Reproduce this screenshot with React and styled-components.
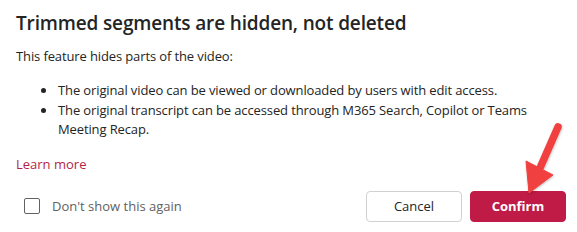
import React, { useState } from "react";
import styled, { createGlobalStyle } from "styled-components";

const GlobalStyle = createGlobalStyle`
  html, body {
    margin: 0;
    padding: 0;
    background: #ffffff;
  }
  body {
    font-family: "Open Sans", "Noto Sans", "Liberation Sans", sans-serif;
    color: #242424;
  }
`;

const Dialog = styled.div`
  position: relative;
  width: 577px;
  height: 232px;
  box-sizing: border-box;
  padding: 9px 11px 0 16px;
  display: flex;
  flex-direction: column;
`;

const Title = styled.h2`
  margin: 0;
  font-size: 19px;
  font-weight: 600;
  line-height: 28px;
  letter-spacing: -0.15px;
  color: #242424;
`;

const Text = styled.p`
  margin: 9px 0 0;
  font-size: 13px;
  line-height: 20px;
  letter-spacing: -0.12px;
  color: #242424;
`;

const List = styled.ul`
  margin: 15px 0 0;
  padding-left: 41px;
  font-size: 13px;
  line-height: 19.5px;
  letter-spacing: -0.12px;
  color: #242424;

  li {
    padding-left: 1px;
  }
`;

const Link = styled.a`
  margin-top: 14px;
  font-size: 13px;
  line-height: 20px;
  color: #b31f48;
  text-decoration: none;
  align-self: flex-start;
  cursor: pointer;
`;

const Footer = styled.div`
  margin-top: 17px;
  display: flex;
  align-items: center;
  justify-content: space-between;
`;

const CheckLabel = styled.label`
  display: flex;
  align-items: center;
  gap: 12px;
  padding-left: 8px;
  font-size: 13px;
  color: #616161;
  cursor: pointer;
`;

const Box = styled.span`
  width: 16px;
  height: 16px;
  box-sizing: border-box;
  border: 1px solid #616161;
  border-radius: 2px;
  background: ${(p) => (p.checked ? "#c01a47" : "#fff")};
`;

const Actions = styled.div`
  display: flex;
  gap: 8px;
`;

const Button = styled.button`
  width: 96px;
  height: 31px;
  box-sizing: border-box;
  border-radius: 4px;
  font-family: inherit;
  font-size: 13px;
  font-weight: ${(p) => (p.primary ? 700 : 400)};
  border: 1px solid ${(p) => (p.primary ? "#c01a47" : "#d1d1d1")};
  background: ${(p) => (p.primary ? "#c01a47" : "#ffffff")};
  color: ${(p) => (p.primary ? "#ffffff" : "#242424")};
  cursor: pointer;
`;

const Arrow = styled.svg`
  position: absolute;
  left: 515px;
  top: 120px;
  width: 55px;
  height: 80px;
  overflow: visible;
  pointer-events: none;
`;

export default function App() {
  const [checked, setChecked] = useState(false);
  return (
    <>
      <GlobalStyle />
      <Dialog>
        <Title>Trimmed segments are hidden, not deleted</Title>
        <Text>This feature hides parts of the video:</Text>
        <List>
          <li>The original video can be viewed or downloaded by users with edit access.</li>
          <li>
            The original transcript can be accessed through M365 Search, Copilot or Teams
            Meeting Recap.
          </li>
        </List>
        <Link>Learn more</Link>
        <Footer>
          <CheckLabel onClick={() => setChecked(!checked)}>
            <Box checked={checked} />
            Don't show this again
          </CheckLabel>
          <Actions>
            <Button>Cancel</Button>
            <Button primary>Confirm</Button>
          </Actions>
        </Footer>
        <Arrow viewBox="0 0 55 80">
          <defs>
            <filter id="sh" x="-20%" y="-20%" width="140%" height="140%">
              <feDropShadow dx="0.5" dy="1" stdDeviation="0.8" floodColor="#000" floodOpacity="0.25" />
            </filter>
          </defs>
          <g filter="url(#sh)" fill="#f0403f" stroke="#f0403f">
            <line x1="43" y1="7" x2="25" y2="48" strokeWidth="7.5" strokeLinecap="round" />
            <polygon points="11,41 38,55 14,73" strokeWidth="1" strokeLinejoin="round" />
          </g>
        </Arrow>
      </Dialog>
    </>
  );
}
